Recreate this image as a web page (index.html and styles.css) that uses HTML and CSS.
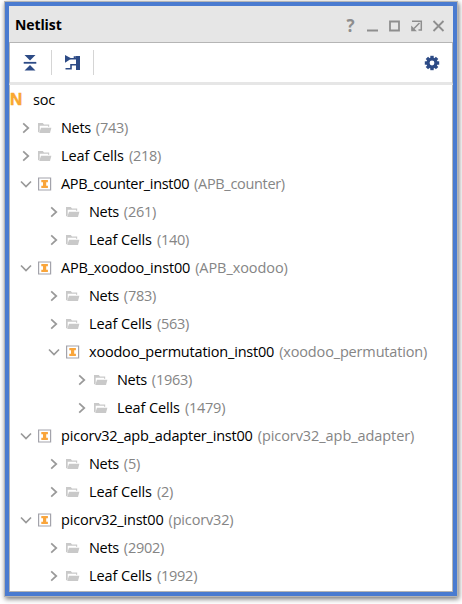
FILE: index.html
```
<!DOCTYPE html>
<html lang="en">
<head>
<meta charset="utf-8">
<title>Netlist</title>
<link rel="stylesheet" href="styles.css">
</head>
<body>
<svg width="0" height="0" class="defs">
  <symbol id="right" viewBox="0 0 12 12"><path d="M3.2 1.3 8.3 6 3.2 10.7" fill="none" stroke="#999" stroke-width="1.7"/></symbol>
  <symbol id="down" viewBox="0 0 12 12"><path d="M1 3.5 6 8.5 11 3.5" fill="none" stroke="#999" stroke-width="1.7"/></symbol>
  <symbol id="folder" viewBox="0 0 14 12"><path d="M0 1h4.8l1.2 1.6h5.2v2.2H10v-1H1.7v5.7L0 10.5z" fill="#c9c9c9"/><path d="M3 5.8h10.4L12 11H1.2z" fill="#c9c9c9"/></symbol>
  <symbol id="inst" viewBox="0 0 14 14"><path d="M.6 1h12v12H.6z" fill="#fff" stroke="#a3a3ab" stroke-width="1.2"/><path d="M3.3 3h6.6v2.2H8.2v3.6h1.7V11H3.3V8.8H5V5.2H3.3z" fill="#f9a53b"/></symbol>
</svg>
<main class="panel">
  <header class="titlebar">
    <h1>Netlist</h1>
    <div class="controls">
      <span class="help">?</span>
      <svg width="13" height="14"><path d="M1 11.5h11" stroke="#8e8e8e" stroke-width="2"/></svg>
      <svg width="13" height="14"><path d="M2 2.5h9v9H2z" fill="none" stroke="#8e8e8e" stroke-width="1.8"/></svg>
      <svg width="13" height="14"><path d="M2 2.3h9.3V11H8.5M9.5 4 4 9.5" fill="none" stroke="#8e8e8e" stroke-width="1.5"/><path d="M1.2 6.5v5.7h5.7z" fill="#8e8e8e"/></svg>
      <svg width="13" height="14"><path d="M1.5 2 11.5 12M11.5 2 1.5 12" stroke="#8e8e8e" stroke-width="1.8"/></svg>
    </div>
  </header>
  <nav class="toolbar">
    <svg class="collapse" width="14" height="16"><path d="M1.5 0h11L7 5.4zM1.5 15.5h11L7 10z" fill="#2d4b86"/><path d="M.7 7.8h12.6" stroke="#2d4b86" stroke-width="1.8"/></svg>
    <i class="sep"></i>
    <svg class="schematic" width="16" height="16"><path d="M0 0 6.5 3.6 0 7.8zM11 1h4v14h-4z" fill="#2d4b86"/><path d="M5 3.8h7M.5 13.7H6v-4h5.5M9.5 3.8V2H12" fill="none" stroke="#2d4b86" stroke-width="1.6"/></svg>
    <i class="sep"></i>
    <svg class="gear" width="16" height="16" viewBox="-8 -8 16 16"><g fill="#2d4b86"><path id="tooth" d="M-1.7-7.2h3.4v14.4h-3.4z"/><use href="#tooth" transform="rotate(45)"/><use href="#tooth" transform="rotate(90)"/><use href="#tooth" transform="rotate(135)"/><circle r="5.6"/></g><circle r="2.4" fill="#fff"/></svg>
  </nav>
  <section class="tree">
    <div class="row root"><b class="n">N</b><span class="name">soc</span></div>
    <div class="row"><svg class="chev"><use href="#right"/></svg><svg class="fold"><use href="#folder"/></svg><span class="name tight">Nets</span><span class="ref">(743)</span></div>
    <div class="row"><svg class="chev"><use href="#right"/></svg><svg class="fold"><use href="#folder"/></svg><span class="name leaf">Leaf Cells</span><span class="ref">(218)</span></div>
    <div class="row"><svg class="chev"><use href="#down"/></svg><svg class="ins"><use href="#inst"/></svg><span class="name tight">APB_counter_inst00</span><span class="ref tight">(APB_counter)</span></div>
    <div class="row l2"><svg class="chev"><use href="#right"/></svg><svg class="fold"><use href="#folder"/></svg><span class="name tight">Nets</span><span class="ref">(261)</span></div>
    <div class="row l2"><svg class="chev"><use href="#right"/></svg><svg class="fold"><use href="#folder"/></svg><span class="name leaf">Leaf Cells</span><span class="ref">(140)</span></div>
    <div class="row"><svg class="chev"><use href="#down"/></svg><svg class="ins"><use href="#inst"/></svg><span class="name">APB_xoodoo_inst00</span><span class="ref loose">(APB_xoodoo)</span></div>
    <div class="row l2"><svg class="chev"><use href="#right"/></svg><svg class="fold"><use href="#folder"/></svg><span class="name tight">Nets</span><span class="ref">(783)</span></div>
    <div class="row l2"><svg class="chev"><use href="#right"/></svg><svg class="fold"><use href="#folder"/></svg><span class="name leaf">Leaf Cells</span><span class="ref">(563)</span></div>
    <div class="row l2"><svg class="chev"><use href="#down"/></svg><svg class="ins"><use href="#inst"/></svg><span class="name">xoodoo_permutation_inst00</span><span class="ref mid">(xoodoo_permutation)</span></div>
    <div class="row l3"><svg class="chev"><use href="#right"/></svg><svg class="fold"><use href="#folder"/></svg><span class="name tight">Nets</span><span class="ref">(1963)</span></div>
    <div class="row l3"><svg class="chev"><use href="#right"/></svg><svg class="fold"><use href="#folder"/></svg><span class="name leaf">Leaf Cells</span><span class="ref">(1479)</span></div>
    <div class="row"><svg class="chev"><use href="#down"/></svg><svg class="ins"><use href="#inst"/></svg><span class="name">picorv32_apb_adapter_inst00</span><span class="ref loose">(picorv32_apb_adapter)</span></div>
    <div class="row l2"><svg class="chev"><use href="#right"/></svg><svg class="fold"><use href="#folder"/></svg><span class="name tight">Nets</span><span class="ref">(5)</span></div>
    <div class="row l2"><svg class="chev"><use href="#right"/></svg><svg class="fold"><use href="#folder"/></svg><span class="name leaf">Leaf Cells</span><span class="ref">(2)</span></div>
    <div class="row"><svg class="chev"><use href="#down"/></svg><svg class="ins"><use href="#inst"/></svg><span class="name">picorv32_inst00</span><span class="ref mid">(picorv32)</span></div>
    <div class="row l2"><svg class="chev"><use href="#right"/></svg><svg class="fold"><use href="#folder"/></svg><span class="name tight">Nets</span><span class="ref">(2902)</span></div>
    <div class="row l2"><svg class="chev"><use href="#right"/></svg><svg class="fold"><use href="#folder"/></svg><span class="name leaf">Leaf Cells</span><span class="ref">(1992)</span></div>
  </section>
</main>
</body>
</html>
```
FILE: styles.css
```
* { box-sizing: border-box; }
body { margin: 0; padding: 2px 5px 8px; height: 604px; overflow: hidden; background: #fff; font-family: "Open Sans", "Noto Sans", sans-serif; font-size: 14.5px; color: #000; }
.defs { display: none; }
.panel { height: 594px; width: 452px; border: 4px solid #4a7bd0; background: #fff; box-shadow: 0 0 0 1px #b5b5b5, 1px 2px 5px 1px #777; display: flex; flex-direction: column; }
.titlebar { height: 37px; flex: none; background: #e6e6e6; border-bottom: 1px solid #b5b5b5; display: flex; align-items: center; justify-content: space-between; padding: 0 8px 0 6px; }
h1 { margin: 0; padding-top: 1px; font-size: 14px; line-height: 20px; font-weight: 700; letter-spacing: -.1px; }
.controls { display: flex; gap: 9px; align-items: center; padding-top: 4px; }
.help { width: 13px; text-align: center; font: 700 17px/14px "Open Sans", sans-serif; color: #8e8e8e; }
.toolbar { height: 42px; flex: none; display: flex; align-items: center; padding: 0 12px 0 13px; border-bottom: 3px solid #e6e6e6; border-left: 1px solid #b5b5b5; border-right: 1px solid #b5b5b5; }
.sep { width: 1px; height: 25px; background: #d5d5d5; }
.collapse { margin-right: 14px; }
.schematic { margin: 0 12px 0 13px; }
.gear { margin-left: auto; }
.tree { flex: 1; min-height: 0; padding-top: 1px; border: solid #b5b5b5; border-width: 0 1px 1px; }
.row { height: 28px; display: flex; align-items: center; padding-left: 10px; line-height: 20px; white-space: nowrap; }
.l2 { padding-left: 38px; }
.l3 { padding-left: 66px; }
.chev { width: 12px; height: 12px; margin-right: 6px; flex: none; }
.fold { width: 14px; height: 12px; margin-right: 9px; flex: none; }
.ins { width: 14px; height: 14px; margin-right: 9px; flex: none; }
.name { letter-spacing: -.2px; }
.ref { margin-left: 5px; color: #858585; letter-spacing: -.24px; }
.ref.mid { letter-spacing: -.16px; }
.name.tight, .ref.tight { letter-spacing: -.32px; }
.name.leaf { letter-spacing: -.1px; }
.ref.loose { letter-spacing: -.07px; }
.root { padding-left: 0; }
.n { width: 23px; color: #f9a72f; font: 700 17px/20px "Liberation Sans", sans-serif; -webkit-text-stroke: .5px #f9a72f; }
```
